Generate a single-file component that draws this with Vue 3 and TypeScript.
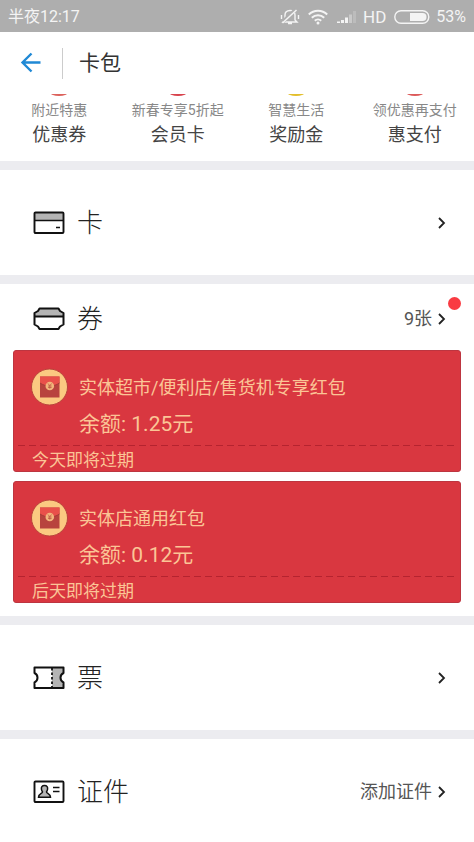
<script setup lang="ts">
interface Shortcut {
  hint: string
  label: string
  color: string
}

interface Voucher {
  title: string
  balance: string
  expiry: string
}

const shortcuts: Shortcut[] = [
  { hint: '附近特惠', label: '优惠券', color: '#dc625c' },
  { hint: '新春专享5折起', label: '会员卡', color: '#d8434d' },
  { hint: '智慧生活', label: '奖励金', color: '#e3bf2c' },
  { hint: '领优惠再支付', label: '惠支付', color: '#dc5a5a' },
]

const vouchers: Voucher[] = [
  { title: '实体超市/便利店/售货机专享红包', balance: '1.25', expiry: '今天即将过期' },
  { title: '实体店通用红包', balance: '0.12', expiry: '后天即将过期' },
]
</script>

<template>
  <div class="page">
    <div class="status">
      <span class="clock">半夜12:17</span>
      <svg class="bell" width="20" height="18" viewBox="0 0 20 18" fill="none" stroke="currentColor" stroke-width="1.4">
        <path d="M5 12V7C5 4.500 6.500 2.500 10 2.500S15 4.500 15 7v5l2 2H3zM8 15.500h4M1.500 7v4M18.500 7v4" />
        <path d="M3 13.500 15.500 1.500" stroke="#aeaeae" stroke-width="3.500" />
        <path d="M2.500 15 16.500 2" stroke-width="1.500" />
      </svg>
      <svg class="wifi" width="20" height="16" viewBox="0 0 20 16" fill="none" stroke="currentColor" stroke-width="2">
        <path d="M.8 5.500a13 13 0 0 1 18.400 0M3.800 8.800a8.800 8.800 0 0 1 12.400 0M6.800 11.800a4.600 4.600 0 0 1 6.400 0" />
        <circle cx="10" cy="14" r="1.500" fill="currentColor" stroke="none" />
      </svg>
      <svg class="signal" width="20" height="14" viewBox="0 0 20 14" fill="currentColor">
        <path d="M0 11.500h3V13H0zM4 10h3v3H4zM8 7.500h3V13H8z" />
        <path d="M12 4.500h3V13h-3z" opacity=".4" />
        <path d="M16 1h3v12h-3z" opacity=".2" />
      </svg>
      <span class="network">HD</span>
      <svg class="battery" width="36" height="14" viewBox="0 0 36 14">
        <rect x=".8" y=".8" width="34" height="12.400" rx="6.200" fill="none" stroke="currentColor" stroke-width="1.400" />
        <path d="M16 3h12.500a4 4 0 0 1 0 8H16z" fill="currentColor" />
      </svg>
      <span class="level">53%</span>
    </div>

    <header class="bar">
      <button class="back" type="button" aria-label="返回">
        <svg width="22" height="22" viewBox="0 0 22 22" fill="none" stroke="#2089d5" stroke-width="2.400">
          <path d="M20.500 10.500H2.500M11.500 1.500 2.500 10.500l9 9" />
        </svg>
      </button>
      <h1>卡包</h1>
    </header>

    <nav class="shortcuts">
      <a v-for="s in shortcuts" :key="s.label" href="#">
        <svg width="36" height="3" viewBox="0 33 36 3">
          <circle cx="18" cy="17" r="18" :fill="s.color" />
        </svg>
        <span class="hint">{{ s.hint }}</span>
        <span class="label">{{ s.label }}</span>
      </a>
    </nav>

    <main>
      <section>
        <a class="row" href="#">
          <svg class="icon" width="32" height="24" viewBox="0 0 32 24">
            <path d="M2 2h28v7.500H2z" fill="#b4b4b4" />
            <rect x="1.500" y="1.500" width="29" height="20.500" rx="1" fill="none" stroke="#111" stroke-width="1.900" />
            <path d="M1.500 9.500h29M23 16.500h4" stroke="#111" stroke-width="1.600" />
          </svg>
          <h2>卡</h2>
          <svg class="chevron" width="8" height="12" viewBox="0 0 8 12"><path d="m1 1 5 5-5 5" /></svg>
        </a>
      </section>

      <section class="coupons">
        <a class="row compact" href="#">
          <svg class="icon" width="32" height="24" viewBox="0 0 32 24" stroke-linejoin="round">
            <path d="M1.500 9.500V6l3.500-2 1.500-2.500h19L27 4l3.500 2v3.500z" fill="#b4b4b4" />
            <path d="M6.500 1.500h19L27 4l3.500 2v11.500L27 19.500l-1.500 2.500h-19L5 19.500l-3.500-2V6L5 4zM1.500 9.500h29" fill="none" stroke="#111" stroke-width="2" />
          </svg>
          <h2>券</h2>
          <span class="note">9张</span>
          <svg class="chevron" width="8" height="12" viewBox="0 0 8 12"><path d="m1 1 5 5-5 5" /></svg>
          <i class="dot"></i>
        </a>

        <ul class="vouchers">
          <li v-for="v in vouchers" :key="v.title">
            <a class="voucher" href="#">
              <div class="detail">
                <svg width="38" height="38" viewBox="0 0 38 38">
                  <circle cx="18.500" cy="19" r="18" fill="#fbc981" stroke="#b9423a" stroke-width="1" />
                  <path d="M9 8.500h19.500v21H9z" fill="#b8433e" />
                  <path d="M9 8.500h19.500v6.500c-3 2-6 3-9.800 3S12 17 9 15z" fill="#e9504a" />
                  <path d="M9 15c6 4 13.500 4 19.500 0" fill="none" stroke="#9c3a36" stroke-width=".8" />
                  <circle cx="18.800" cy="18" r="4.300" fill="#f2b57c" />
                  <path d="m17 15.500 1.800 2.200 1.800-2.200M18.800 17.700v3M17 18h3.600M17 19.500h3.600" fill="none" stroke="#b8503e" stroke-width=".7" />
                </svg>
                <div>
                  <h3>{{ v.title }}</h3>
                  <p class="balance">余额: {{ v.balance }}元</p>
                </div>
              </div>
              <svg class="perforation" width="100%" height="1">
                <line x1="0" y1="0" x2="100%" y2="0" />
              </svg>
              <p class="expiry">{{ v.expiry }}</p>
            </a>
          </li>
        </ul>
      </section>

      <section>
        <a class="row" href="#">
          <svg class="icon" width="32" height="24" viewBox="0 0 32 24" stroke-linejoin="round">
            <path d="M19 1.500h11.500v5c-4 2-4 8 0 10V22H19z" fill="#b4b4b4" />
            <path d="M1.500 1.500h29v5.500c-4 2-4 7.500 0 9.500V22h-29v-5.500c4-2 4-7.500 0-9.500z" fill="none" stroke="#111" stroke-width="2" />
            <path d="M19 2v20" stroke="#111" stroke-width="1.800" stroke-dasharray="2.500 2" />
          </svg>
          <h2>票</h2>
          <svg class="chevron" width="8" height="12" viewBox="0 0 8 12"><path d="m1 1 5 5-5 5" /></svg>
        </a>
      </section>

      <section>
        <a class="row" href="#">
          <svg class="icon" width="32" height="24" viewBox="0 0 32 24">
            <rect x="1.500" y="1.500" width="29" height="20.500" rx="1" fill="none" stroke="#111" stroke-width="1.900" />
            <path d="M11.500 5.500c-2.500 0-3.500 1.800-3 4 .2 1.200.8 1.800 1 2.500 0 1.500-4 1.500-4 5.300h12c0-3.800-4-3.800-4-5.300.2-.7.8-1.300 1-2.500.5-2.200-.5-4-3-4z" fill="#b4b4b4" stroke="#111" stroke-width="1.500" />
            <path d="M20 7.500h6.500M20 11.500h6.500" stroke="#111" stroke-width="1.700" />
          </svg>
          <h2>证件</h2>
          <span class="note">添加证件</span>
          <svg class="chevron" width="8" height="12" viewBox="0 0 8 12"><path d="m1 1 5 5-5 5" /></svg>
        </a>
      </section>
    </main>
  </div>
</template>

<style>
body {
  margin: 0;
  background: #fff;
}
</style>

<style scoped>
.page {
  font-family: Roboto, "Noto Sans CJK SC", sans-serif;
  color: #444;
}

h1, h2, h3, p, ul {
  margin: 0;
  padding: 0;
  font-weight: 400;
  list-style: none;
}

a {
  color: inherit;
  text-decoration: none;
}

svg {
  display: block;
  flex: none;
}

.status {
  display: flex;
  align-items: center;
  box-sizing: border-box;
  height: 32px;
  padding: 2px 8px 0;
  background: #aeaeae;
  color: #f4f4f4;
  font-size: 16px;
  line-height: 24px;
}

.clock {
  margin-right: auto;
}

.wifi {
  margin-left: 8px;
}

.signal {
  margin-left: 9px;
}

.network {
  margin-left: 6px;
  font-size: 17px;
}

.battery {
  margin: 0 6px 0 8px;
}

.bar {
  display: flex;
  align-items: center;
  height: 62px;
  padding-left: 20px;
}

.back {
  padding: 0;
  border: 0;
  background: none;
}

.bar h1 {
  margin-left: 20px;
  padding-left: 16px;
  border-left: 1px solid #ccc;
  color: #333;
  font-size: 21px;
  line-height: 31px;
}

.shortcuts {
  display: grid;
  grid-template-columns: repeat(4, 1fr);
  padding-bottom: 13px;
}

.shortcuts a {
  display: flex;
  flex-direction: column;
  align-items: center;
  white-space: nowrap;
}

.hint {
  margin-top: 3px;
  color: #888;
  font-size: 14px;
  line-height: 20px;
}

.label {
  margin-top: 2px;
  font-size: 18px;
  line-height: 26px;
}

section {
  border-top: 9px solid #ececf0;
}

.row {
  position: relative;
  display: flex;
  align-items: center;
  height: 105px;
  padding: 0 28px 0 33px;
}

.compact {
  height: 66px;
  padding-top: 4px;
  box-sizing: border-box;
}

.row h2 {
  margin: 0 auto 0 12px;
  color: #222;
  font-size: 26px;
  font-weight: 300;
  line-height: 36px;
}

.note {
  margin-right: 6px;
  color: #555;
  font-size: 18px;
  line-height: 26px;
}

.chevron {
  fill: none;
  stroke: #222;
  stroke-width: 1.8;
}

.dot {
  position: absolute;
  top: 13px;
  right: 13px;
  width: 13px;
  height: 13px;
  border-radius: 50%;
  background: #f93b42;
}

.vouchers {
  display: grid;
  gap: 9px;
  padding: 0 13px 13px;
}

.voucher {
  display: block;
  padding: 0 4px;
  border: 1px solid #bd3540;
  border-radius: 3px;
  background: #d93740;
  color: #fbc596;
}

.detail {
  display: flex;
  gap: 10px;
  padding: 17px 13px 4px;
}

.detail h3 {
  margin-top: 7px;
  font-size: 18px;
  line-height: 26px;
}

.balance {
  margin-top: 6px;
  font-size: 21px;
  line-height: 34px;
}

.perforation line {
  stroke: #b5232f;
  stroke-width: 2;
  stroke-dasharray: 7 4;
}

.expiry {
  padding: 3px 0 0 14px;
  font-size: 17px;
  line-height: 22px;
}
</style>
